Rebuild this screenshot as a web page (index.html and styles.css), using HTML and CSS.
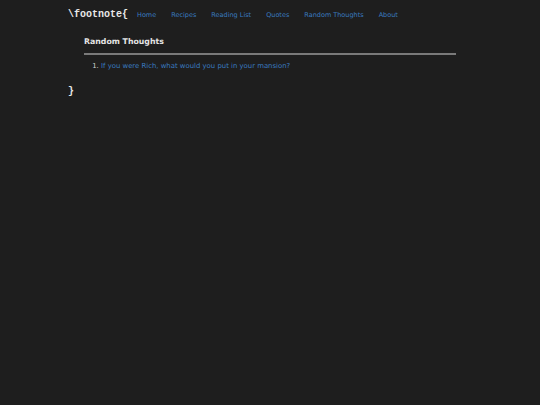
FILE: index.html
```html
<!DOCTYPE html>
<html>
<head>
<meta charset="utf-8">
<link rel="stylesheet" href="styles.css">
</head>
<body>
<div class="wrap">
  <header class="top">
    <span class="logo">\footnote{</span>
    <nav class="nav">
      <a href="#">Home</a>
      <a href="#">Recipes</a>
      <a href="#">Reading List</a>
      <a href="#">Quotes</a>
      <a href="#">Random Thoughts</a>
      <a href="#">About</a>
    </nav>
  </header>
  <main class="content">
    <h1 class="title">Random Thoughts</h1>
    <ol class="list">
      <li><a href="#">If you were Rich, what would you put in your mansion?</a></li>
    </ol>
  </main>
  <div class="close">}</div>
</div>
</body>
</html>
```
FILE: styles.css
```css
html, body {
  margin: 0;
  padding: 0;
  background: #1e1e1e;
  height: 100%;
}
body {
  font-family: "DejaVu Sans", Verdana, sans-serif;
  font-size: 6.5px;
  color: #d8d8d8;
}
.wrap {
  width: 404px;
  margin: 0 auto;
}
.top {
  display: flex;
  align-items: center;
  height: 29px;
}
.logo {
  font-family: "Liberation Mono", "Courier New", monospace;
  font-weight: bold;
  font-size: 10px;
  color: #e8e8e8;
  width: 69px;
}
.nav {
  display: flex;
}
.nav a {
  color: #3a7cc0;
  text-decoration: none;
  margin-right: 15px;
}
.content {
  margin: 0 16px;
}
.title {
  font-size: 7.8px;
  font-weight: bold;
  color: #e4e4e4;
  margin: 0;
  padding: 8px 0 6px;
  border-bottom: 2px solid #7a7a7a;
  line-height: 10px;
}
.list {
  margin: 6px 0 0;
  padding-left: 17px;
  color: #d0d0d0;
  font-size: 6.9px;
}
.list li {
  line-height: 10px;
}
.list a {
  color: #3a7cc0;
  text-decoration: none;
}
.close {
  margin-top: 15px;
  font-family: "Liberation Mono", "Courier New", monospace;
  font-weight: bold;
  font-size: 10px;
  color: #e8e8e8;
}
```
